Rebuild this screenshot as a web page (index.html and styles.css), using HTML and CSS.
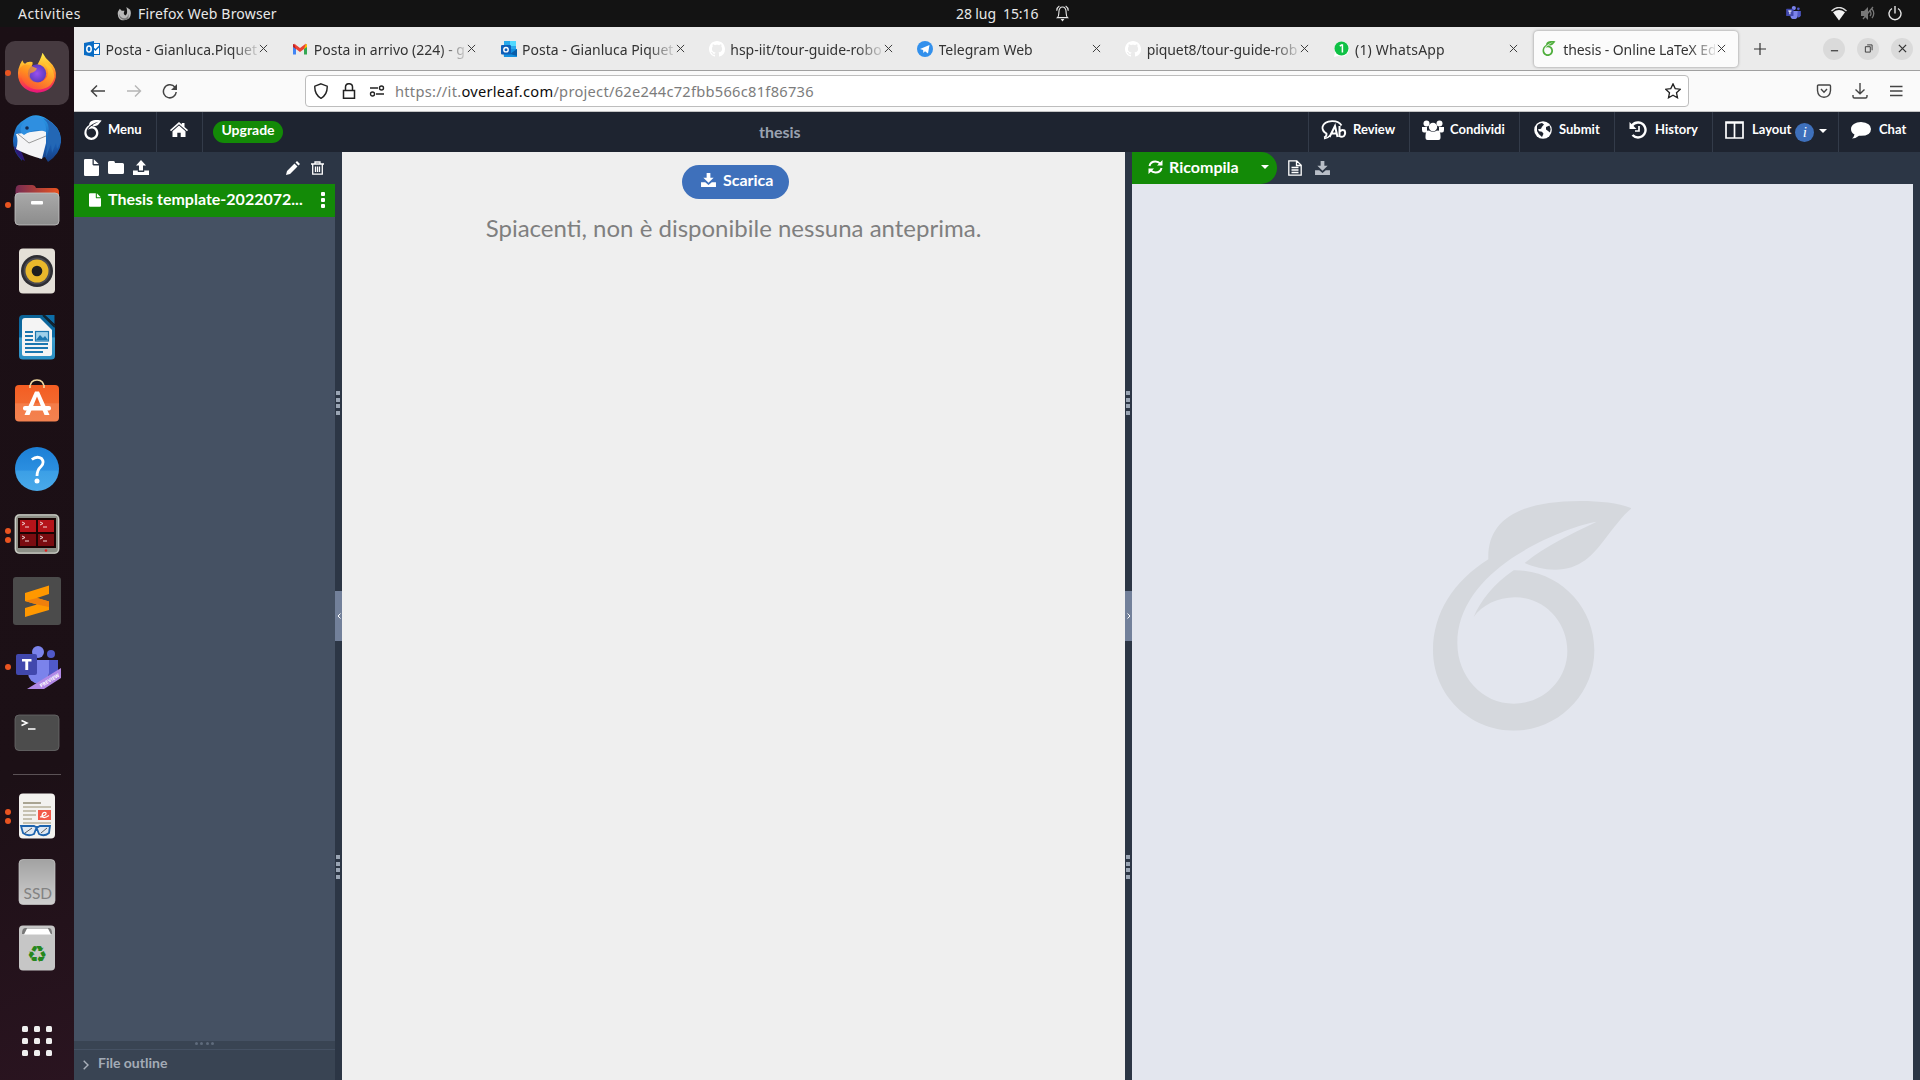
FILE: index.html
```html
<!DOCTYPE html>
<html lang="it">
<head>
<meta charset="utf-8">
<title>thesis - Online LaTeX Editor Overleaf</title>
<link rel="stylesheet" href="styles.css">
</head>
<body>
<svg class="defs" aria-hidden="true">
  <defs>
    <linearGradient id="gFox" x1="0" y1="0" x2="0" y2="1"><stop offset="0" stop-color="#fff04a"/><stop offset=".35" stop-color="#ffb02b"/><stop offset=".65" stop-color="#ff5b2e"/><stop offset="1" stop-color="#e8127f"/></linearGradient>
    <linearGradient id="gFox2" x1="1" y1="0" x2="0" y2="1"><stop offset="0" stop-color="#ffe135"/><stop offset=".6" stop-color="#ff8a1c"/><stop offset="1" stop-color="#ff3b45"/></linearGradient>
    <radialGradient id="gOrb"><stop offset="0" stop-color="#9a50f0"/><stop offset="1" stop-color="#5b3bc0"/></radialGradient>
    <linearGradient id="gBird" x1="0" y1="0" x2="0" y2="1"><stop offset="0" stop-color="#2c9ce8"/><stop offset=".6" stop-color="#1a62b8"/><stop offset="1" stop-color="#173c80"/></linearGradient>
    <linearGradient id="gFold" x1="0" y1="0" x2="1" y2="0"><stop offset="0" stop-color="#752b53"/><stop offset="1" stop-color="#e95420"/></linearGradient>
    <linearGradient id="gGrey" x1="0" y1="0" x2="0" y2="1"><stop offset="0" stop-color="#a9a9a9"/><stop offset="1" stop-color="#8c8c8c"/></linearGradient>
    <linearGradient id="gDisk" x1="0" y1="0" x2="0" y2="1"><stop offset="0" stop-color="#a2a2a2"/><stop offset="1" stop-color="#cfcfcf"/></linearGradient>
    <linearGradient id="gHelp" x1="0" y1="0" x2="0" y2="1"><stop offset="0" stop-color="#1c7fd6"/><stop offset=".53" stop-color="#2b8fe0"/><stop offset=".54" stop-color="#3b9fe6"/><stop offset="1" stop-color="#4aaaea"/></linearGradient>
    <linearGradient id="gBag" x1="0" y1="0" x2="0" y2="1"><stop offset="0" stop-color="#f45d22"/><stop offset=".5" stop-color="#f2692f"/><stop offset=".51" stop-color="#f47c48"/><stop offset="1" stop-color="#f38250"/></linearGradient>
    <linearGradient id="gDoc" x1="0" y1="0" x2="0" y2="1"><stop offset="0" stop-color="#0c6396"/><stop offset=".5" stop-color="#0d6ea8"/><stop offset=".51" stop-color="#3c9ccb"/><stop offset="1" stop-color="#2a8fc4"/></linearGradient>
    <symbol id="leaf" viewBox="98 64 596 689"><path d="M264 239C260 125 350 64 540 64C600 64 655 70 694 86C670 104 640 145 610 183C578 224 540 270 463 270C430 270 400 262 373 250C440 195 510 165 589 126C535 135 430 172 335 235C240 300 171 385 171 490C171 590 245 672 340 672C430 672 501 600 501 514C501 425 430 353 345 353C290 353 245 378 220 412C240 365 280 312 340 272C475 270 582 380 582 512C582 645 473 753 340 753C207 753 98 645 98 512C98 400 160 305 264 239Z"/></symbol>
    <symbol id="x" viewBox="0 0 10 10"><path d="M1 1l8 8M9 1l-8 8" fill="none" stroke="#3c3c3c" stroke-width="1.1"/></symbol>
    <symbol id="file" viewBox="0 0 15 17"><path d="M0 1.200Q0 0 1.200 0H8.500V5.300Q8.500 6.400 9.600 6.400H15V15.800Q15 17 13.800 17H1.200Q0 17 0 15.800ZM9.800 0.200L14.700 5.100H9.800Z"/></symbol>
    <symbol id="octo" viewBox="0 0 16 16"><path d="M8 0C3.580 0 0 3.580 0 8c0 3.540 2.290 6.530 5.470 7.590.4.070.55-.17.55-.38 0-.19-.01-.82-.01-1.490-2.010.37-2.530-.49-2.690-.94-.09-.23-.48-.94-.82-1.130-.28-.15-.68-.52-.01-.53.63-.01 1.080.58 1.230.82.72 1.210 1.870.87 2.330.66.07-.52.28-.87.51-1.070-1.780-.2-3.640-.89-3.640-3.950 0-.87.31-1.590.82-2.150-.08-.2-.36-1.020.08-2.120 0 0 .67-.21 2.200.82.64-.18 1.320-.27 2-.27s1.360.09 2 .27c1.530-1.040 2.200-.82 2.200-.82.44 1.100.16 1.920.08 2.120.51.56.82 1.270.82 2.150 0 3.070-1.870 3.750-3.650 3.950.29.25.54.73.54 1.480 0 1.070-.01 1.930-.01 2.200 0 .21.15.46.55.38A8 8 0 0016 8c0-4.420-3.580-8-8-8z" fill="#fff"/></symbol>
    <symbol id="dl" viewBox="0 0 16 15"><path d="M6 0h4v5h3.500L8 10.500 2.500 5H6ZM0 10h4.500L8 12.800 11.500 10H16v5H0Z"/></symbol>
    <symbol id="teams" viewBox="0 0 45 43"><circle cx="22" cy="6" r="6" fill="#7b83eb"/><circle cx="35" cy="8" r="4" fill="#5059c9"/><path d="M31 14h11v13q-2 7-9 6Z" fill="#5059c9"/><path d="M12 14h21v13a10.500 10.500 0 01-21 0Z" fill="#7b83eb"/><rect y="8" width="21" height="21" rx="2" fill="#4148ad"/><path d="M6 13h9.500v2.600h-3.300V24H9.300v-8.400H6Z" fill="#fff"/></symbol>
  </defs>
</svg>

<header class="topbar">
  <span class="act">Activities</span>
  <svg class="foxgrey" viewBox="0 0 16 16"><path d="M14 4Q16 9 13 13Q8 17 3 14Q0 11 1 6L3 3L5 5H8Q6 9 9 10Q12 9 10 1Q13 3 14 4Z" fill="#b9b9b9"/><path d="M2 8Q4 14 9 13Q12 12 12 8Q14 15 8 15Q2 14 2 8Z" fill="#777"/></svg>
  <span class="ffx">Firefox Web Browser</span>
  <span class="clock">28 lug&nbsp; 15:16</span>
  <svg class="bell" viewBox="0 0 14 18"><path d="M1.500 13.500h11c-1.700-1.500-1.500-3-1.600-6C10.800 4.500 9.500 2 7 2S3.200 4.500 3.100 7.500C3 10.500 3.200 12 1.500 13.500ZM.8 6C.9 3.500 2 1.800 3.600.9M13.200 6C13.100 3.500 12 1.800 10.400.9" fill="none" stroke="#e8e8e8" stroke-width="1.200"/><path d="M5 15h4l-2 2.500Z" fill="#e8e8e8"/></svg>
  <span class="tray">
    <svg width="16" height="15"><use href="#teams"/></svg>
    <svg class="wifi" width="16" height="14" viewBox="0 0 16 14"><path d="M.5 4Q8-3 15.500 4" fill="none" stroke="#ddd" stroke-width="1.400"/><path d="M2 5.200Q8 .8 14 5.200L8 13.500Z" fill="#f2f2f2"/></svg>
    <svg class="mute" width="16" height="15" viewBox="0 0 16 15"><path d="M1 5h3l4-4v13l-4-4H1Z" fill="#777"/><path d="M10 5q2 2.500 0 5M12 3q3.500 4.500 0 9M3 13L13 1" fill="none" stroke="#777" stroke-width="1.300"/></svg>
    <svg width="14" height="15" viewBox="0 0 14 15"><path d="M4 2.500A6 6 0 1010 2.500M7 0v7.500" fill="none" stroke="#e4e4e4" stroke-width="1.400"/></svg>
  </span>
</header>

<div class="desktop">
<aside class="dock">
  <div class="app active one"><svg viewBox="0 0 48 48"><path d="M30 2Q33 8 38 12Q46 19 44.500 29Q41 45 24 45.500Q7 44 3.500 29Q2 19 8 10Q9 13 11 14Q13 11 19 12Q20 14 18 17L22 19Q28 10 30 2Z" fill="url(#gFox)"/><circle cx="24" cy="24.500" r="10" fill="url(#gOrb)"/><path d="M4.500 20Q10 11 19 17L24 19Q22 23 17 24Q14 29 20 33Q29 37 35 28Q38 19 30 12Q42 15 43 28Q40 42 24 42Q8 41 4.500 20Z" fill="url(#gFox2)" opacity=".75"/></svg></div>
  <div class="app"><svg viewBox="0 0 48 48"><path d="M11 5Q22-4 34 4Q49 13 48 27Q47 39 35 47L32 42L26 44L28 39L8 36L9 46Q-3 34 1 19Q3 9 11 5Z" fill="url(#gBird)"/><path d="M1 31Q3 42 12 46L9 38Z" fill="#2d1a78"/><path d="M3 19L33 15L33 28L29 44Q14 40 3 34Q6 26 3 19Z" fill="#f4f4f6"/><path d="M5 19L16 28L33 21" fill="none" stroke="#999" stroke-width="1"/><path d="M8 12Q10 5 20 1Q34 3 33 17Q23 12 11 20Q6 17 8 12Z" fill="#2f8fe0"/><path d="M35 18Q38 10 30 3Q48 10 48 27L44 34L43 28L39 38L38 29L33 42Z" fill="#2367b5"/><circle cx="14" cy="13" r="1.800" fill="#142a50"/></svg></div>
  <div class="app one"><svg viewBox="0 0 48 48"><path d="M2.500 10Q2.500 4 6 4H19Q22 4 23 7H42Q46 7 46 11V20H2.500Z" fill="url(#gFold)"/><rect x="2" y="12" width="44" height="32" rx="4" fill="url(#gGrey)" stroke="#c4c4c4" stroke-width=".8"/><rect x="18" y="20" width="12" height="3.500" rx="1" fill="#fff"/></svg></div>
  <div class="app"><svg viewBox="0 0 48 48"><rect x="6" y="1.500" width="36" height="45" rx="4" fill="#e4e0d8"/><circle cx="24" cy="24" r="16" fill="#2e2e33"/><circle cx="24" cy="24" r="13.500" fill="#4a4a50"/><circle cx="24" cy="24" r="11.500" fill="#e9b82b"/><circle cx="24" cy="24" r="5.300" fill="#1f1f1f"/></svg></div>
  <div class="app"><svg viewBox="0 0 48 48"><path d="M10 2H31L42 13V43Q42 46.500 38 46.500H10Q6 46.500 6 43V6Q6 2 10 2Z" fill="url(#gDoc)"/><path d="M30 2L42 14" stroke="#10242f" stroke-width="2"/><path d="M32 2H41.500V11Z" fill="#0d6ea8"/><path d="M12 5H27L39 17V41Q39 43 37 43H11Q9 43 9 41V8Q9 5 12 5Z" fill="#f4f4f4"/><path d="M12 19h8M12 23h8M12 27h8M12 31h23M12 35h23M12 39h18" stroke="#1b77b0" stroke-width="2"/><rect x="22.500" y="18.500" width="13" height="9.500" fill="#9ed0ea" stroke="#1b77b0" stroke-width="1.200"/><path d="M23 27l4-5 3 3 2-2 3 4Z" fill="#1b77b0"/></svg></div>
  <div class="app"><svg class="up1" viewBox="0 0 48 48"><path d="M17 10Q17 2 24 2Q31 2 31 10" fill="none" stroke="#f3d9a0" stroke-width="1.600"/><rect x="2" y="7" width="44" height="36.500" rx="4" fill="url(#gBag)"/><path d="M17 10V7M31 10V7" stroke="#f3d9a0" stroke-width="1.600"/><path d="M11.500 37L22 13.500H26L36.500 37H31.500L24 18.500L16.500 37Z" fill="#fff"/><rect x="10" y="28" width="28" height="4.500" rx="2" fill="#fff"/></svg></div>
  <div class="app"><svg viewBox="0 0 48 48"><circle cx="24" cy="24" r="22" fill="url(#gHelp)"/><path d="M18.800 14.500Q24 10.500 28.500 13.500Q32 17.500 28 21.500Q24 25 24 31" fill="none" stroke="#fff" stroke-width="2.800"/><circle cx="24" cy="36" r="2.500" fill="#fff"/></svg></div>
  <div class="app two"><svg class="up1" viewBox="0 0 48 48"><rect x="1.500" y="4" width="45" height="40" rx="5" fill="#8c8f86"/><rect x="2.500" y="5" width="43" height="38" rx="4" fill="none" stroke="#cfd0ca" stroke-width="1.200"/><rect x="5" y="8" width="38" height="30" fill="#1b0404"/><path d="M7 10h16v12H7ZM25 10h16v12H25Z" fill="#b5141a"/><path d="M7 24h16v12H7ZM25 24h16v12H25Z" fill="#7a0c10"/><path d="M9 12l3 1.500-3 1.500M12 17h4M27 12l3 1.500-3 1.500M30 17h4M9 26l3 1.500-3 1.500M12 31h4M27 26l3 1.500-3 1.500M30 31h4" fill="none" stroke="#f0d4d4" stroke-width="1"/><circle cx="33" cy="40.500" r="1.300" fill="#e02020"/></svg></div>
  <div class="app"><svg viewBox="0 0 48 48"><rect width="48" height="48" rx="3" fill="#4b4b4b"/><path d="M12 16L36 8.500V17L24 21L36 24.500V33L12 40V31L24 27.500L12 24Z" fill="#ff9800"/><path d="M12 24L24 21L36 24.500L36 30L24 27.500Z" fill="#ef7f0c"/></svg></div>
  <div class="app one"><svg viewBox="0 0 48 48"><svg x="3" y="3" width="45" height="43"><use href="#teams"/></svg><path d="M14 46L48 25V35L31 46Z" fill="#b189e6"/><text class="preview" transform="translate(28 44.500) rotate(-31)">PREVIEW</text></svg></div>
  <div class="app"><svg viewBox="0 0 48 48"><rect x="2" y="6" width="44" height="35.500" rx="4" fill="#4c4c4c" stroke="#6a6a6a" stroke-width=".8"/><path d="M8.500 11.500L14 14L8.500 16.500M15 20h7.500" fill="none" stroke="#fff" stroke-width="1.500"/></svg></div>
  <div class="rule"></div>
  <div class="app two"><svg viewBox="0 0 48 48"><rect x="6" y="1.500" width="36" height="45" rx="4" fill="#f3f2ef"/><path d="M10 11h18" stroke="#a9a492" stroke-width="2"/><path d="M10 15h28M10 19h13M10 23h13M10 27h9M10 31h28" stroke="#c6c1b0" stroke-width="1.800"/><rect x="25" y="18" width="13" height="10" fill="#f25a4a"/><path d="M27 25Q35 23 32.500 20.500Q29 20 29 24.500Q31 27 36 23.500" fill="none" stroke="#fff" stroke-width="1.200"/><path d="M8 34h13l2 1h2l2-1h10l-1 7q-5 4-10 1l-2-5h-1l-2 5q-6 3-11-1Z" fill="#dfe8f2" stroke="#1d63ad" stroke-width="1.800"/><path d="M12 41L19 36M28 41L34 36" stroke="#333" stroke-width=".8"/></svg></div>
  <div class="app"><svg viewBox="0 0 48 48"><rect x="6" y="1.500" width="36" height="45" rx="4" fill="url(#gDisk)" stroke="#c9c9c9" stroke-width=".7"/><text class="ssd" x="10.500" y="41">SSD</text></svg></div>
  <div class="app"><svg viewBox="0 0 48 48"><rect x="6" y="1.500" width="36" height="45" rx="4" fill="#c6c6c6"/><path d="M9 10Q9 4 12 4H36Q39 4 39 10Z" fill="#777"/><path d="M11 10.500L14 4.500H35L38 10.500Z" fill="#fff"/><text class="recycle" x="24" y="37.500">♻</text></svg></div>
  <div class="grid"><i></i><i></i><i></i><i></i><i></i><i></i><i></i><i></i><i></i></div>
</aside>

<section class="browser">
  <nav class="tabs">
    <div class="tab"><svg class="fav" viewBox="0 0 16 16"><rect x="7" y="2.500" width="8.500" height="11" fill="#fff" stroke="#0a6cc4"/><path d="M8 6l3.500 3 4-4" fill="none" stroke="#0a6cc4" stroke-width="1.500"/><path d="M0 2L10 0V16L0 14Z" fill="#0a6cc4"/><ellipse cx="5" cy="8" rx="2.200" ry="3" fill="none" stroke="#fff" stroke-width="1.500"/></svg><span class="label">Posta - Gianluca.Piquet</span><svg class="close"><use href="#x"/></svg></div>
    <div class="tab"><svg class="fav" viewBox="0 0 16 16"><path d="M1 3v10.500h3V7Z" fill="#4285f4"/><path d="M15 3v10.500h-3V7Z" fill="#34a853"/><path d="M1 3l3 1v4L1 6Z" fill="#c5221f"/><path d="M15 3l-3 1v4l3-2Z" fill="#fbbc04"/><path d="M2 2.500l6 4.500 6-4.500L12 8 8 11 4 8Z" fill="#ea4335"/></svg><span class="label">Posta in arrivo (224) - g</span><svg class="close"><use href="#x"/></svg></div>
    <div class="tab"><svg class="fav" viewBox="0 0 16 16"><path d="M3 0h12v8H3Z" fill="#28a8ea"/><path d="M9 0h6v5H9Z" fill="#50d9ff"/><path d="M2 8h14v8H3Z" fill="#1490df"/><path d="M9 13l7-5v7Z" fill="#0a5ea8"/><rect y="4" width="10" height="9.500" rx="1" fill="#0f5fb8"/><circle cx="5" cy="8.700" r="2.200" fill="none" stroke="#fff" stroke-width="1.400"/></svg><span class="label">Posta - Gianluca Piquet</span><svg class="close"><use href="#x"/></svg></div>
    <div class="tab"><svg class="fav"><use href="#octo"/></svg><span class="label">hsp-iit/tour-guide-robo</span><svg class="close"><use href="#x"/></svg></div>
    <div class="tab"><svg class="fav" viewBox="0 0 16 16"><circle cx="8" cy="8" r="8" fill="#3290ec"/><path d="M3 8l9.500-4-1.500 8.500-3-2.200-1.600 1.600-.3-2.800Z" fill="#fff"/></svg><span class="label">Telegram Web</span><svg class="close"><use href="#x"/></svg></div>
    <div class="tab"><svg class="fav"><use href="#octo"/></svg><span class="label narrow">piquet8/tour-guide-rob</span><svg class="close"><use href="#x"/></svg></div>
    <div class="tab"><svg class="fav" viewBox="0 0 16 16"><path d="M0 16L1 11A7.500 7.500 0 118 15.500L4 15Z" fill="#fff"/><circle cx="7.500" cy="7.500" r="7" fill="#0fc145"/><path d="M5.800 5.200l1.700-1.200h.9v7.400" fill="none" stroke="#fff" stroke-width="1.500"/></svg><span class="label wide">(1) WhatsApp</span><svg class="close"><use href="#x"/></svg></div>
    <div class="tab current"><svg class="fav leaf"><use href="#leaf"/></svg><span class="label narrow">thesis - Online LaTeX Ed</span><svg class="close"><use href="#x"/></svg></div>
    <svg class="plus" viewBox="0 0 12 12"><path d="M6 0v12M0 6h12" stroke="#333" stroke-width="1.200"/></svg>
    <div class="wins">
      <span><svg viewBox="0 0 10 10"><path d="M1 7.500h8" stroke="#333" stroke-width="1.300"/></svg></span>
      <span><svg viewBox="0 0 10 10"><path d="M1.500 3h5.500v6H1.500ZM3.500 1h5.500v6" fill="none" stroke="#333"/></svg></span>
      <span><svg viewBox="0 0 10 10"><path d="M1 1l8 8M9 1l-8 8" stroke="#333" stroke-width="1.400"/></svg></span>
    </div>
  </nav>

  <div class="navbar">
    <svg class="ic back" viewBox="0 0 16 16"><path d="M15 8H1.500M7 2.500L1.500 8 7 13.500" fill="none" stroke="#444" stroke-width="1.500"/></svg>
    <svg class="ic fwd" viewBox="0 0 16 16"><path d="M1 8h13.500M9 2.500L14.500 8 9 13.500" fill="none" stroke="#b5b5b5" stroke-width="1.400"/></svg>
    <svg class="ic reload" viewBox="0 0 16 16"><path d="M14.200 9A6.400 6.400 0 112 5.800 6.400 6.400 0 0113 4.200" fill="none" stroke="#444" stroke-width="1.500"/><path d="M15 1v6H9Z" fill="#444"/></svg>
    <div class="url">
      <svg viewBox="0 0 16 16"><path d="M8 .8l6.200 2.400Q14.600 11.500 8 15.300 1.400 11.500 1.800 3.200Z" fill="none" stroke="#222" stroke-width="1.400"/></svg>
      <svg viewBox="0 0 16 16"><path d="M2.500 7.500h11v7.800h-11ZM4.500 7V4Q4.500.7 8 .7T11.500 4V7" fill="none" stroke="#222" stroke-width="1.500"/></svg>
      <svg viewBox="0 0 16 16"><path d="M1 5h8M7 11h8" stroke="#222" stroke-width="1.500"/><circle cx="12.500" cy="5" r="2" fill="none" stroke="#222" stroke-width="1.400"/><circle cx="3.500" cy="11" r="2" fill="none" stroke="#222" stroke-width="1.400"/></svg>
      <span class="addr">https://it.<em>overleaf.com</em>/project/62e244c72fbb566c81f86736</span>
      <svg class="star" viewBox="0 0 16 16"><path d="M8 .9l2.200 4.700 5.100.6-3.800 3.500 1 5.100L8 12.300l-4.500 2.500 1-5.100L.7 6.200l5.100-.6Z" fill="none" stroke="#222" stroke-width="1.300"/></svg>
    </div>
    <div class="tools">
      <svg viewBox="0 0 16 16"><path d="M2.500 2h11q1 0 1 1v4.500Q14 14 8 14.300 2 14 1.500 7.500V3q0-1 1-1ZM5 6l3 3.200L11 6" fill="none" stroke="#444" stroke-width="1.400"/></svg>
      <svg viewBox="0 0 16 16"><path d="M8 0v10.500M3.500 6.500L8 10.800l4.500-4.300M1 12v1.500Q1 15 2.500 15h11q1.500 0 1.500-1.500V12" fill="none" stroke="#444" stroke-width="1.400"/></svg>
      <svg viewBox="0 0 16 16"><path d="M2 3.500h12.500M2 8h12.500M2 12.500h12.500" stroke="#444" stroke-width="1.400"/></svg>
    </div>
  </div>

  <div class="olhead">
    <div class="cell c-menu"><svg class="ollogo"><use href="#leaf"/></svg><span>Menu</span></div>
    <div class="cell c-home"><svg viewBox="0 0 18 15"><path d="M9 0L11.800 2.500V1h2.700v4L18 8l-1 1.200L9 2.200 1 9.200 0 8Z"/><path d="M9 3.600l6.500 5.600V15h-4.800v-4.200H7.300V15H2.500V9.200Z"/></svg></div>
    <div class="cell c-up"><span class="pill">Upgrade</span></div>
    <div class="title">thesis</div>
    <div class="cell r c-rev"><svg viewBox="0 0 26 20"><path d="M3 17.500q3-1 2.500-4Q1 11 1.500 7 3 1.500 11 1.200 18 1 20.500 5.500" fill="none" stroke="#fff" stroke-width="1.800"/><path d="M3 18.500q3 .5 6-3" fill="none" stroke="#fff" stroke-width="1.500"/><path d="M8.500 17L14 6l2.500 11M10.500 13.500h5.500M18.500 6v11M18.500 12q2-3 5-1.500 1.500 3-.5 5.500-2.500 1.500-4.500 0" fill="none" stroke="#fff" stroke-width="2"/></svg><span>Review</span></div>
    <div class="cell r c-con"><svg viewBox="0 0 22 20"><circle cx="4.500" cy="3.500" r="3"/><circle cx="17.500" cy="3.500" r="3"/><path d="M0 7h5q-.5 4 1 5.500H2Q0 12.500 0 10ZM22 7h-5q.5 4-1 5.500h4q2 0 2-2.500Z"/><circle cx="11" cy="7" r="4.200"/><path d="M3.500 16Q3.500 10.500 7 10.500q4 2.500 8 0 3.500 0 3.500 5.500v2q0 2-2 2h-11q-2 0-2-2Z"/></svg><span>Condividi</span></div>
    <div class="cell r c-sub"><svg viewBox="0 0 18 18"><circle cx="9" cy="9" r="8.800"/><path d="M3 5Q4 2.500 8 2l2 1.500-2 2.200-1 2-3 .5 1 2 3 .5 1.500 2-1.500 3.300Q4 13 3 10Z" fill="#1e2430"/><path d="M12 6l3.500-1.500Q17.500 8 16 11.500l-2-1.500-2-1.500Z" fill="#1e2430"/></svg><span>Submit</span></div>
    <div class="cell r c-his"><svg viewBox="0 0 18 18"><path d="M3 4.500A7.500 7.500 0 119 16.500 7.500 7.500 0 013.500 14" fill="none" stroke="#fff" stroke-width="2.400"/><path d="M.5 1v7h7Z"/><path d="M10 5v5H6" fill="none" stroke="#fff" stroke-width="1.700"/></svg><span>History</span></div>
    <div class="cell r c-lay"><svg viewBox="0 0 19 18"><path d="M1 1h17v16H1ZM9.500 1v16M1 2h17" fill="none" stroke="#fff" stroke-width="1.700"/></svg><span>Layout</span><i class="info">i</i><i class="caret"></i></div>
    <div class="cell r c-chat"><svg viewBox="0 0 20 18"><path d="M10 1C4.500 1 0 4 0 8q0 3.500 3.500 5.500Q3 16 1 17.500q4 0 7-2.700 12 .7 12-6.800 0-6-10-7Z"/></svg><span>Chat</span></div>
  </div>

  <main class="work">
    <div class="files">
      <div class="ftools">
        <svg width="15" height="17"><use href="#file"/></svg>
        <svg class="f2" width="16" height="13" viewBox="0 0 16 13"><path d="M0 1.500Q0 0 1.500 0h4Q7 0 7 2h7.500Q16 2 16 3.500v8Q16 13 14.500 13h-13Q0 13 0 11.500Z"/></svg>
        <svg class="f3" width="16" height="15" viewBox="0 0 16 15"><path d="M8 0l5 5.500h-3V10.500H6V5.500H3ZM0 10.500h4.800V12h6.400v-1.500H16V15H0Z"/></svg>
        <svg class="f4" width="14" height="14" viewBox="0 0 14 14"><path d="M0 14l1-4 7.500-7.500 3 3L4 13ZM9.500 1.500L11 0l3 3-1.500 1.500Z"/></svg>
        <svg class="f5" width="13" height="14" viewBox="0 0 13 14"><path d="M0 3h13M4 3V1h5v2M1.700 3v10.200h9.600V3M4.500 5.500V11M6.500 5.500V11M8.500 5.500V11" fill="none" stroke="#fff" stroke-width="1.300"/></svg>
      </div>
      <div class="row"><svg width="12" height="14"><use href="#file"/></svg><span class="rowt">Thesis template-2022072...</span><span class="kebab"><i></i><i></i><i></i></span></div>
      <div class="outgrip"><i></i><i></i><i></i><i></i></div>
      <div class="outline"><svg width="6" height="10" viewBox="0 0 6 10"><path d="M.7.7L5 5 .7 9.300" fill="none" stroke="#a9b0ba" stroke-width="1.400"/></svg><span>File outline</span></div>
    </div>
    <div class="gutter"><div class="dots"><i></i><i></i><i></i><i></i></div><div class="toggle"><svg viewBox="0 0 4 6"><path d="M3.500.5L1 3l2.500 2.500" fill="none" stroke="#fff"/></svg></div><div class="dots d2"><i></i><i></i><i></i><i></i></div></div>
    <div class="editor">
      <div class="download"><svg width="15" height="14"><use href="#dl"/></svg><span>Scarica</span></div>
      <p class="nope">Spiacenti, non è disponibile nessuna anteprima.</p>
    </div>
    <div class="gutter"><div class="dots"><i></i><i></i><i></i><i></i></div><div class="toggle"><svg viewBox="0 0 4 6"><path d="M.5.500L3 3 .5 5.500" fill="none" stroke="#fff"/></svg></div><div class="dots d2"><i></i><i></i><i></i><i></i></div></div>
    <div class="pdf">
      <div class="ptools">
        <div class="recomp"><svg width="15" height="14" viewBox="0 0 15 14"><path d="M1.500 6Q2.500 1.500 7.500 1.500 10.500 1.500 12.500 3.800M13.500 8Q12.500 12.500 7.500 12.500 4.500 12.500 2.500 10.200" fill="none" stroke="#fff" stroke-width="2"/><path d="M14.500 0v5.500H9ZM.5 14V8.500H6Z"/></svg><span>Ricompila</span><i class="caret"></i></div>
        <svg class="log" width="14" height="16" viewBox="0 0 14 16"><path d="M.8.800h8l4.400 4.400v10H.8ZM8.500 1v4.500H13M3.500 7.500h7M3.500 10h7M3.500 12.500h7" fill="none" stroke="#fff" stroke-width="1.300"/></svg>
        <svg class="pdl" width="15" height="14"><use href="#dl"/></svg>
      </div>
      <div class="blank"><svg viewBox="41 64 653 785"><use href="#leaf" x="98" y="64" width="596" height="689"/></svg></div>
    </div>
  </main>
</section>
</div>
</body>
</html>
```
FILE: styles.css
```css
* { box-sizing: border-box; }
body { margin: 0; width: 1920px; height: 1080px; overflow: hidden; background: #1c1016; font-family: "Noto Sans", "Open Sans", sans-serif; }
svg { display: block; flex: none; }
i, em { font-style: normal; }
.defs { position: absolute; width: 0; height: 0; }

.topbar { height: 27px; background: #131313; color: #e8e8e8; display: flex; align-items: center; font-size: 14px; white-space: nowrap; }
.act { margin-left: 18px; width: 62px; letter-spacing: .45px; }
.foxgrey { width: 15px; height: 15px; margin: 0 6px 0 37px; }
.ffx { width: 138px; letter-spacing: .18px; }
.clock { margin-left: 680px; letter-spacing: -.1px; }
.bell { width: 13px; height: 17px; margin-left: 18px; }
.tray { margin-left: auto; margin-right: 18px; display: flex; align-items: center; }
.wifi { margin-left: 29px; }
.mute { margin: 0 12px 0 13px; }

.desktop { display: flex; height: 1053px; }
.dock { width: 74px; flex: none; padding-top: 13px; display: flex; flex-direction: column; background: linear-gradient(160deg, #1b0f15 0%, #1c1016 70%, #2a1420 100%); }
.app { height: 66px; display: flex; align-items: center; padding-left: 5px; flex: none; }
.app svg { width: 48px; height: 48px; margin-left: 8px; }
.app svg svg { width: 45px; height: 43px; }
.app .up1 { margin-bottom: 2px; }
.app.active { background: #463a40; height: 64px; width: 64px; margin: 1px 5px; padding-left: 0; border-radius: 10px; }
.app.active svg { width: 44px; height: 44px; margin-left: 10px; }
.one, .two { position: relative; }
.one::before, .two::before, .two::after { content: ""; position: absolute; left: 5px; top: 30px; width: 6px; height: 6px; border-radius: 3px; background: #e95420; }
.active.one::before { left: 0; top: 29px; }
.two::before { top: 26px; }
.two::after { top: 35px; }
.preview { font: bold 5px "Open Sans", sans-serif; fill: #fff; }
.ssd { font: 15.500px Lato, sans-serif; fill: #828282; }
.recycle { font: 23px "DejaVu Sans", sans-serif; fill: #26871d; text-anchor: middle; }
.rule { height: 17px; margin: 0 13px; background: linear-gradient(#5b5256, #5b5256) 0 8px / 100% 1px no-repeat; flex: none; }
.grid { margin: 45px 0 0 22px; display: grid; grid-template-columns: repeat(3, 6px); gap: 6px; }
.grid i { height: 6px; border-radius: 1.500px; background: #efefef; }

.browser { flex: 1; display: flex; flex-direction: column; min-width: 0; }
.tabs { height: 44px; background: #ebebeb; border-bottom: 1px solid #a0a0a0; display: flex; align-items: center; flex: none; }
.tab { width: 204.250px; margin: 0 2px; height: 36px; padding-left: 8px; display: flex; align-items: center; border-radius: 4px; flex: none; }
.tab.current { background: #fbfbfb; box-shadow: 0 0 3px #8a8a8a; }
.fav { width: 16px; height: 16px; margin-right: 5.500px; }
.fav.leaf { width: 14px; height: 15px; margin-right: 7.500px; fill: #4fae3c; }
.label { width: 152px; padding-top: 2px; overflow: hidden; white-space: nowrap; font-size: 14px; color: #333; -webkit-mask-image: linear-gradient(90deg, #000 126px, transparent 156px); mask-image: linear-gradient(90deg, #000 126px, transparent 156px); }
.label.narrow { letter-spacing: -.1px; }
.label.wide { letter-spacing: .2px; }
.close { width: 9px; height: 9px; margin-left: 1.500px; }
.plus { width: 12px; height: 12px; margin-left: 14px; }
.wins { display: flex; gap: 12px; margin-left: auto; margin-right: 7px; }
.wins span { width: 22px; height: 22px; border-radius: 11px; background: #dadada; display: flex; align-items: center; justify-content: center; }
.wins svg { width: 9px; height: 9px; }

.navbar { height: 41px; background: #fafafa; border-bottom: 1px solid #c4c4c4; display: flex; align-items: center; padding-left: 16px; flex: none; }
.ic { width: 16px; height: 16px; margin-right: 20px; }
.url { width: 1384px; height: 32px; margin-left: 107px; background: #fff; border: 1px solid #bdbdbd; border-radius: 4px; display: flex; align-items: center; padding: 0 7px; }
.url svg { width: 16px; height: 16px; margin-right: 12px; }
.addr { margin-left: -2px; font-size: 14.670px; letter-spacing: .26px; color: #7c7c7c; white-space: nowrap; }
.addr em { color: #0c0c0c; }
.url svg.star { margin-left: auto; margin-right: 0; }
.tools { display: flex; gap: 20px; margin-left: auto; margin-right: 16px; }
.tools svg { width: 16px; height: 16px; }

.olhead { height: 40px; background: #1e2430; color: #fff; fill: #fff; display: flex; flex: none; font: bold 13px Lato, sans-serif; white-space: nowrap; }
.cell { display: flex; align-items: center; padding-bottom: 5px; border-right: 1px solid #333b49; flex: none; }
.cell > span { padding-bottom: 1px; }
.c-menu { width: 83px; padding-left: 10px; }
.ollogo { width: 18px; height: 20px; margin-right: 6px; }
.c-home { width: 46px; padding-left: 13px; }
.c-home svg { width: 18px; height: 15px; }
.c-up { border: 0; padding: 0 0 0 10px; }
.cell .pill { width: 70px; height: 22px; border-radius: 11px; background: #138a07; display: flex; justify-content: center; font-size: 14px; line-height: 18px; padding: 0; }
.title { flex: 1; display: flex; align-items: center; padding: 0 0 2px 476px; color: #9aa2b0; font-size: 16px; }
.cell.r { border-right: 0; border-left: 1px solid #333b49; padding-left: 12px; }
.c-rev { width: 101px; }
.c-rev svg { width: 26px; height: 20px; margin-right: 6px; }
.c-con { width: 110px; }
.c-con svg { width: 22px; height: 20px; margin-right: 6px; }
.c-sub { width: 95px; }
.cell.c-sub { padding-left: 14px; }
.c-sub svg { width: 18px; height: 18px; margin-right: 7px; }
.c-his { width: 98px; }
.cell.c-his { padding-left: 14px; }
.c-his svg { width: 18px; height: 18px; margin-right: 8px; }
.c-lay { width: 126px; }
.c-lay svg { width: 19px; height: 18px; margin-right: 8px; }
.c-chat { width: 82px; }
.c-chat svg { width: 20px; height: 18px; margin-right: 8px; }
.info { width: 19px; height: 19px; border-radius: 10px; margin: 6px 5px 0 4px; background: #3e70bb; font: italic 15px/18px "Liberation Serif", serif; text-align: center; }
.caret { border: 4px solid transparent; border-top-color: #fff; border-bottom: 0; margin-top: 2px; }

.work { flex: 1; display: flex; background: #2c3645; font-family: Lato, sans-serif; min-height: 0; }
.files { width: 261px; background: #455163; display: flex; flex-direction: column; fill: #fff; color: #fff; }
.ftools { height: 32px; background: #2c3645; display: flex; align-items: center; padding: 0 0 1px 10px; flex: none; }
.f2 { margin-left: 9px; }
.f3 { margin-left: 9px; }
.f4 { margin-left: 137px; }
.f5 { margin-left: 11px; }
.row { height: 33px; background: #138a07; display: flex; align-items: center; padding: 0 0 1px 15px; font-weight: 700; font-size: 16px; flex: none; }
.rowt { margin-left: 7px; width: 213px; line-height: 20px; padding-bottom: 2px; white-space: nowrap; }
.kebab { display: grid; gap: 2px; }
.kebab i { width: 4px; height: 4px; border-radius: 1px; background: #fff; }
.outgrip { margin-top: auto; height: 8px; background: #394453; display: flex; gap: 2.300px; justify-content: center; padding-top: 1px; }
.outgrip i { width: 3px; height: 3px; border-radius: 2px; background: #5f6b7c; }
.outline { height: 31px; background: #394453; border-top: 1px solid #455163; display: flex; align-items: center; padding: 0 0 1px 9px; font-weight: 700; font-size: 14px; color: #a3abb6; }
.outline span { margin-left: 9px; padding-bottom: 4px; }
.gutter { width: 7px; padding-right: 1px; display: flex; flex-direction: column; align-items: center; background: #2c3645; flex: none; }
.dots { margin-top: 239px; display: grid; gap: 2.670px; }
.dots i { width: 4px; height: 4px; background: #9aa5b4; }
.toggle { width: 7px; height: 50px; margin: 176px -1px 0 0; background: #72809a; display: flex; align-items: center; justify-content: center; }
.toggle svg { width: 4px; height: 6px; }
.d2 { margin-top: 214px; }
.editor { width: 783px; background: #efefef; display: flex; flex-direction: column; align-items: center; flex: none; }
.download { margin: 13px 0 0 4px; width: 107px; height: 34px; border-radius: 17px; background: #3e70bb; color: #fff; fill: #fff; display: flex; align-items: center; padding: 0 0 4px 19px; font-weight: 700; font-size: 16px; }
.download span { margin-left: 7px; padding-bottom: 1px; }
.nope { margin: 13px 0 0; font-size: 24px; line-height: 32px; color: #7f7f7f; white-space: nowrap; }
.pdf { width: 781px; display: flex; flex-direction: column; flex: none; }
.ptools { height: 32px; display: flex; align-items: center; fill: #b8bec7; }
.recomp { width: 145px; height: 32px; border-radius: 0 16px 16px 0; background: #138a07; color: #fff; fill: #fff; display: flex; align-items: center; padding: 0 8px 2px 16px; font-weight: 700; font-size: 16px; }
.recomp span { margin-left: 6px; padding-bottom: 2px; }
.recomp .caret { margin-left: auto; margin-top: 0; }
.log { margin-left: 11px; }
.pdl { margin-left: 13px; }
.blank { flex: 1; background: #e3e6ee; display: flex; align-items: center; justify-content: center; fill: #d5d8dd; }
.blank svg { width: 217.700px; height: 261.700px; }
```
